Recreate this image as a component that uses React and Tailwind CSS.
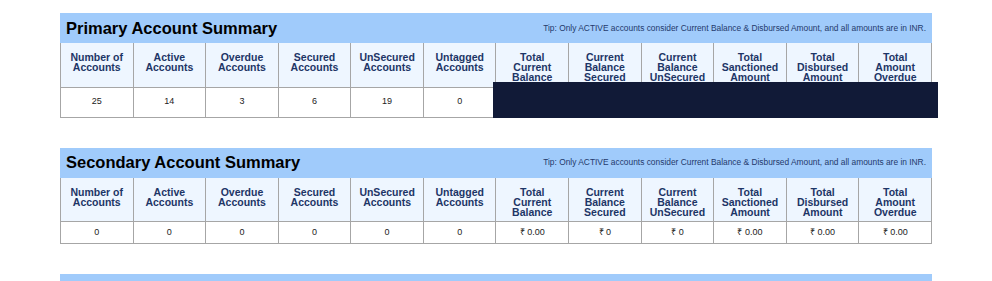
const headers = [
  ["Number of", "Accounts"],
  ["Active", "Accounts"],
  ["Overdue", "Accounts"],
  ["Secured", "Accounts"],
  ["UnSecured", "Accounts"],
  ["Untagged", "Accounts"],
  ["Total", "Current", "Balance"],
  ["Current", "Balance", "Secured"],
  ["Current", "Balance", "UnSecured"],
  ["Total", "Sanctioned", "Amount"],
  ["Total", "Disbursed", "Amount"],
  ["Total", "Amount", "Overdue"],
];

const TIP =
  "Tip: Only ACTIVE accounts consider Current Balance & Disbursed Amount, and all amounts are in INR.";

function SummaryTable({ title, values, tall, redacted }) {
  return (
    <div className="relative">
      <div className="flex items-center justify-between bg-[#a0cbfb] h-[30px] pl-[6px] pr-[6px]">
        <h2 className="text-[16.5px] font-bold text-black leading-none">{title}</h2>
        <span className="text-[8.4px] text-[#243a6b]">{TIP}</span>
      </div>
      <table className="w-full table-fixed border-collapse">
        <thead>
          <tr className="h-[44px]">
            {headers.map((h, i) => (
              <th
                key={i}
                className="border border-[#a6a6a6] border-t-0 bg-[#eef6ff] align-top pt-[9px] px-1 text-[10.5px] font-bold leading-[10px] text-[#1d3566]"
              >
                {h.map((l) => (
                  <div key={l}>{l}</div>
                ))}
              </th>
            ))}
          </tr>
        </thead>
        <tbody>
          <tr className={tall ? "h-[30px]" : "h-[22px]"}>
            {values.map((v, i) => (
              <td
                key={i}
                className={`border border-[#a6a6a6] bg-white text-center text-[9px] text-[#222] ${
                  tall ? "align-top pt-[7px]" : "align-middle"
                }`}
              >
                {v}
              </td>
            ))}
          </tr>
        </tbody>
      </table>
      {redacted && (
        <div className="absolute left-[433px] top-[69px] w-[445px] h-[36px] bg-[#111a37]" />
      )}
    </div>
  );
}

export default function App() {
  return (
    <div
      className="w-[992px] h-[281px] overflow-hidden bg-white"
      style={{ fontFamily: '"Liberation Sans", Arial, sans-serif' }}
    >
      <div className="ml-[60px] w-[872px] pt-[13px] flex flex-col gap-[30px]">
        <SummaryTable
          title="Primary Account Summary"
          values={["25", "14", "3", "6", "19", "0", "", "", "", "", "", ""]}
          tall
          redacted
        />
        <SummaryTable
          title="Secondary Account Summary"
          values={["0", "0", "0", "0", "0", "0", "₹ 0.00", "₹ 0", "₹ 0", "₹ 0.00", "₹ 0.00", "₹ 0.00"]}
        />
        <div className="bg-[#a0cbfb] h-[30px]" />
      </div>
    </div>
  );
}
